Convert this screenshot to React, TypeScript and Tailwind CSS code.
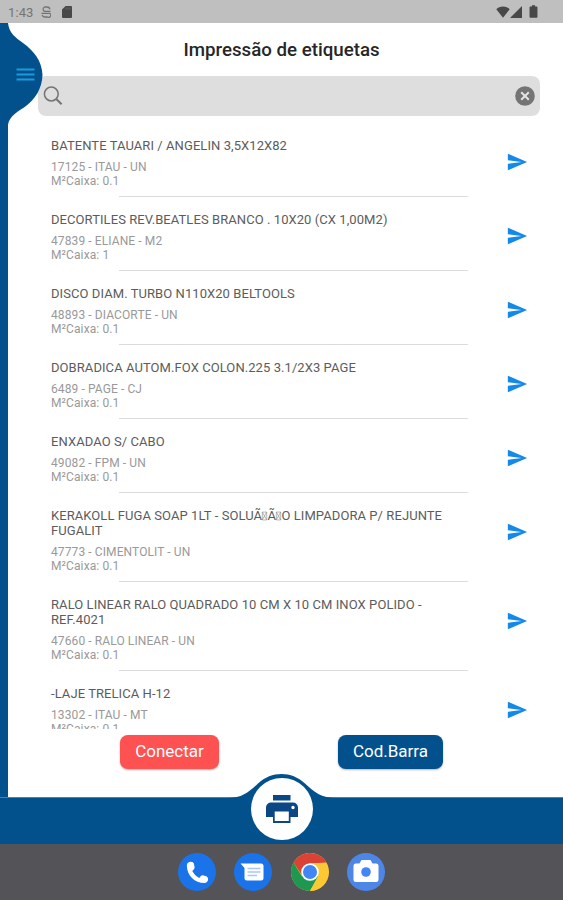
import { MdBatteryFull, MdSend } from "react-icons/md"

interface Product {
  title: React.ReactNode
  detail: string
  box: string
}

// Placeholder drawn for characters the font cannot show
function Missing() {
  return (
    <svg viewBox="0 0 8 10" className="-mx-[0.8px] inline-block h-[10px] w-[7px] align-[-1px]" fill="none" stroke="#888" strokeWidth="0.7">
      <path d="M1.5.5h5v9h-5zM1.5.5l5 9M6.5.5l-5 9" />
    </svg>
  )
}

const PRODUCTS: Product[] = [
  { title: "BATENTE TAUARI / ANGELIN 3,5X12X82", detail: "17125 - ITAU - UN", box: "0.1" },
  { title: "DECORTILES REV.BEATLES BRANCO . 10X20 (CX 1,00M2)", detail: "47839 - ELIANE - M2", box: "1" },
  { title: "DISCO DIAM. TURBO N110X20 BELTOOLS", detail: "48893 - DIACORTE - UN", box: "0.1" },
  { title: "DOBRADICA AUTOM.FOX COLON.225 3.1/2X3 PAGE", detail: "6489 - PAGE - CJ", box: "0.1" },
  { title: "ENXADAO S/ CABO", detail: "49082 - FPM - UN", box: "0.1" },
  {
    title: (
      <>
        KERAKOLL FUGA SOAP 1LT - SOLUÃ<Missing />Ã<Missing />O LIMPADORA P/ REJUNTE
        <br />
        FUGALIT
      </>
    ),
    detail: "47773 - CIMENTOLIT - UN",
    box: "0.1",
  },
  {
    title: (
      <>
        RALO LINEAR RALO QUADRADO 10 CM X 10 CM INOX POLIDO -<br />
        REF.4021
      </>
    ),
    detail: "47660 - RALO LINEAR - UN",
    box: "0.1",
  },
  { title: "-LAJE TRELICA H-12", detail: "13302 - ITAU - MT", box: "0.1" },
]

function StatusBar() {
  return (
    <header className="flex h-[23px] shrink-0 items-center bg-[#bfbfbf] pl-2 pr-[20px] text-[#484848]">
      <span className="w-[33px] pt-[1px] text-[13px] leading-none tracking-[0.1px] text-[#747474]">1:43</span>
      <svg viewBox="0 0 10 12" className="h-[12px] w-[10px]" fill="none" stroke="#747474" strokeWidth="1.3">
        <path d="M8.800 3.400A2.600 2.600 0 0 0 6.200 1H3.600A2.300 2.300 0 0 0 3.600 5.300H9.500M.500 7.300H8.700A2.100 2.100 0 0 1 6.400 11H3.800A2.600 2.600 0 0 1 1.200 8.900" />
      </svg>
      <svg viewBox="0 0 10 12" className="ml-[11px] h-[12px] w-[10px]" fill="currentColor">
        <path d="M3.600 0H9a1 1 0 0 1 1 1v10a1 1 0 0 1-1 1H1a1 1 0 0 1-1-1V3.600z" />
        <path d="M4 1.500v2M6 1.500v2M8 1.500v2" stroke="#777" strokeWidth=".7" />
      </svg>
      <div className="ml-auto flex items-center">
        <svg viewBox="0 0 14 12" className="h-[12px] w-[14px]" fill="currentColor">
          <path d="M7 11.700.300 3.300C2 1.600 4.300.600 7 .600s5 1 6.700 2.700z" />
        </svg>
        <svg viewBox="0 0 12 12" className="h-[12px] w-[12px]" fill="currentColor">
          <path d="M0 12 12 0v12z" />
        </svg>
        <MdBatteryFull className="ml-[2px] h-[15px] w-[19px]" preserveAspectRatio="none" />
      </div>
    </header>
  )
}

function SearchBar() {
  return (
    <div className="ml-[30px] mr-[23px] flex h-[40px] items-center justify-between rounded-[8px] bg-[#dedede] pl-[5px] pr-[5px]">
      <svg viewBox="0 0 20 20" className="h-[20px] w-[20px]" fill="none" stroke="#747474" strokeWidth="1.500">
        <circle cx="8.300" cy="8" r="6.900" />
        <path d="m13 12.800 5.600 5.400" strokeWidth="2" />
      </svg>
      <svg viewBox="0 0 20 20" className="h-[20px] w-[20px]">
        <circle cx="10" cy="10" r="9.800" fill="#747474" />
        <path d="m6.200 6.200 7.600 7.600m0-7.600-7.600 7.600" stroke="#e4e4e4" strokeWidth="2" />
      </svg>
    </div>
  )
}

function ProductRow({ product }: { product: Product }) {
  return (
    <li className="flex shrink-0 flex-col">
      <div className="flex items-start pb-[8px] pl-[43px] pr-[35px] pt-[15px]">
        <div className="flex-1 whitespace-nowrap">
          <p className="text-[13px] leading-[15px] tracking-[0.07px] text-[#5c5c5c]">{product.title}</p>
          <p className="mt-[7px] text-[12px] leading-[14px] tracking-[0.1px] text-[#999]">
            {product.detail}
            <br />
            M²Caixa: {product.box}
          </p>
        </div>
        <MdSend className="mt-[13px] h-[22px] w-[22px] text-[#1389ea]" />
      </div>
      <div className="ml-[111px] mr-[95px] h-px bg-[#dcdcdc]" />
    </li>
  )
}

function Dock() {
  return (
    <nav className="flex h-[56px] shrink-0 items-center justify-center gap-[18.300px] bg-[#545357]">
      <svg viewBox="0 0 38 38" className="h-[38px] w-[38px]">
        <circle cx="19" cy="19" r="19" fill="#1a73e8" />
        <path
          transform="translate(5.300 5.300) scale(1.180)"
          fill="#fff"
          d="M6.200 3C4.600 3 3 4.200 3 6c0 8.300 6.700 15 15 15 1.800 0 3-1.600 3-3.200 0-1.500-.7-2.600-2-2.900l-2-.4c-.9-.2-1.700.1-2.300.8l-1.200 1.300C10.700 15 9 13.300 7.600 10.700l1.200-1.300c.6-.6.9-1.400.7-2.300L9.100 5C8.800 3.700 7.700 3 6.200 3z"
        />
      </svg>
      <svg viewBox="0 0 38 38" className="h-[38px] w-[38px]">
        <circle cx="19" cy="19" r="19" fill="#1a73e8" />
        <path d="M6.500 10.500H27a2.500 2.500 0 0 1 2.500 2.500v12a2.500 2.500 0 0 1-2.500 2.500H13a2.500 2.500 0 0 1-2.500-2.500V15z" fill="#fff" />
        <path d="M13.500 15.500h13M13.500 19h13M13.500 22.500h9.500" stroke="#a9c8fa" strokeWidth="1.500" />
      </svg>
      <svg viewBox="0 0 38 38" className="h-[38px] w-[38px]">
        <circle cx="19" cy="19" r="19" fill="#fcc934" />
        <path d="M2.550 9.500A19 19 0 0 1 35.450 9.500L19 10.500 11.640 23.250z" fill="#d94235" />
        <path d="M2.550 9.500A19 19 0 0 0 19 38L27 23.500 19 19 11 23.500z" fill="#1e9850" />
        <path d="M19 10.500h16.450A19 19 0 0 1 19 38l7.800-14z" fill="#fcc934" />
        <circle cx="19" cy="19" r="8.800" fill="#fff" />
        <circle cx="19" cy="19" r="7" fill="#4285f4" />
      </svg>
      <svg viewBox="0 0 38 38" className="h-[38px] w-[38px]">
        <circle cx="19" cy="19" r="19" fill="#4e86e8" />
        <path d="M14.500 7h9l2 3.500H29a2.500 2.500 0 0 1 2.500 2.500v13.500A2.500 2.500 0 0 1 29 29H9a2.500 2.500 0 0 1-2.500-2.500V13A2.500 2.500 0 0 1 9 10.500h3.500z" fill="#fff" />
        <circle cx="19" cy="19" r="4.800" fill="#4285f4" />
      </svg>
    </nav>
  )
}

export default function App() {
  return (
    <div className="flex h-[900px] w-[563px] flex-col overflow-hidden bg-white font-['Roboto',sans-serif]">
      <StatusBar />

      <div className="flex h-[774px] shrink-0">
        {/* Side drawer edge, its handle bulges over the page */}
        <aside className="relative w-2 shrink-0 bg-[#02518d]">
          <svg viewBox="0 0 43 102" className="absolute left-0 top-0 z-10 h-[102px] w-[43px] max-w-none">
            <path d="M0 0h8C9 10 16 15 23 20 34 28 42 38 42.500 52 42 66 35 76 26 83 19 88 9 93 8 102H0z" fill="#02518d" />
            <path d="M16.500 46.500h18M16.500 51.500h18M16.500 56.500h18" stroke="#1a9bdc" strokeWidth="2" />
          </svg>
        </aside>

        <main className="flex min-w-0 flex-1 flex-col">
          <h1 className="h-[53px] pr-[8px] text-center text-[18.700px] font-medium leading-[54px] text-[#262626]">
            Impressão de etiquetas
          </h1>
          <SearchBar />

          <ul className="mt-[7px] flex h-[606px] shrink-0 flex-col overflow-hidden">
            {PRODUCTS.map((product) => (
              <ProductRow key={product.detail} product={product} />
            ))}
          </ul>

          <div className="flex items-start gap-[119px] pl-[112px] pt-[6px] text-[17px] text-white">
            <button className="h-[34px] w-[99px] rounded-[8px] bg-[#fd5152] shadow-[0_1px_2px_rgba(0,0,0,0.3)]">Conectar</button>
            <button className="h-[34px] w-[105px] rounded-[8px] bg-[#02518d] shadow-[0_1px_2px_rgba(0,0,0,0.3)]">Cod.Barra</button>
          </div>
        </main>
      </div>

      {/* Bottom bar with the raised print button */}
      <footer className="relative flex h-[47px] shrink-0 justify-center border-t border-[#557f9f] bg-[#02518d]">
        <svg viewBox="0 0 110 25" className="absolute left-[227px] top-[-25px] h-[26px] w-[110px]" preserveAspectRatio="none">
          <path d="M0 24C16 24 22 18 31 10 38 4 46 1 54.500 1S71 4 78 10C87 18 94 24 110 24V25H0z" fill="#02518d" />
        </svg>
        <button className="relative -mt-[20px] flex h-[62px] w-[62px] items-center justify-center rounded-full bg-white">
          <svg viewBox="0 0 32 28" className="h-[28px] w-[32px]" fill="#0b4784">
            <path d="M7 0h17.500v5.500H7z" />
            <path
              fillRule="evenodd"
              d="M5 7.500h22a5 5 0 0 1 5 5V22h-7.500v6H7v-6H0V12.500a5 5 0 0 1 5-5zM8.700 16.500V26h14.100v-9.500zM27 10.800a1.700 1.700 0 1 0 0 3.400 1.700 1.700 0 0 0 0-3.400z"
            />
          </svg>
        </button>
      </footer>

      <Dock />
    </div>
  )
}
